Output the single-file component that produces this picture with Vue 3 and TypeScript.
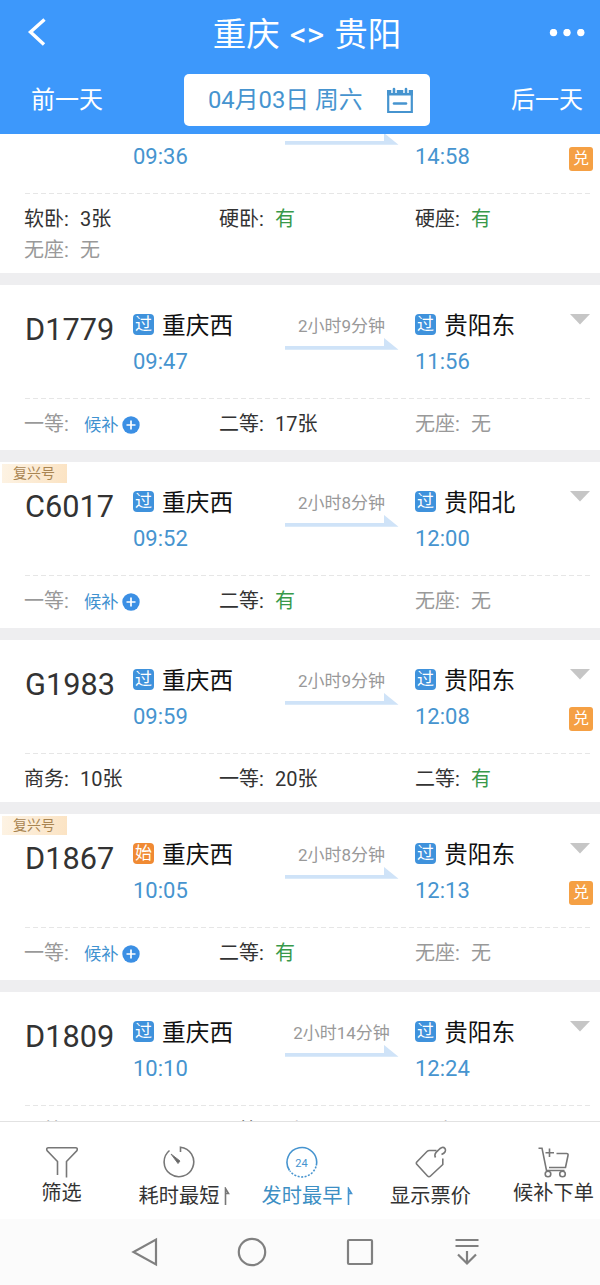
<script setup lang="ts">
type Mark = '过' | '始'

interface Seat {
  name: string
  value: string
  state: 'count' | 'plenty' | 'none' | 'waitlist'
}

interface Train {
  code: string
  from: string
  to: string
  fromMark: Mark
  toMark: Mark
  depart: string
  arrive: string
  duration: string
  fuxing: boolean
  redeem: boolean
  size: string
  seats: Seat[]
}

const count = (name: string, value: string): Seat => ({ name, value, state: 'count' })
const plenty = (name: string): Seat => ({ name, value: '有', state: 'plenty' })
const none = (name: string): Seat => ({ name, value: '无', state: 'none' })
const waitlist = (name: string): Seat => ({ name, value: '候补', state: 'waitlist' })

const trains: Train[] = [
  {
    code: 'K835', from: '重庆西', to: '贵阳', fromMark: '过', toMark: '过',
    depart: '09:36', arrive: '14:58', duration: '5小时22分钟', fuxing: false, redeem: true, size: 'tall',
    seats: [count('软卧', '3张'), plenty('硬卧'), plenty('硬座'), none('无座')],
  },
  {
    code: 'D1779', from: '重庆西', to: '贵阳东', fromMark: '过', toMark: '过',
    depart: '09:47', arrive: '11:56', duration: '2小时9分钟', fuxing: false, redeem: false, size: 'mid',
    seats: [waitlist('一等'), count('二等', '17张'), none('无座')],
  },
  {
    code: 'C6017', from: '重庆西', to: '贵阳北', fromMark: '过', toMark: '过',
    depart: '09:52', arrive: '12:00', duration: '2小时8分钟', fuxing: true, redeem: false, size: 'full',
    seats: [waitlist('一等'), plenty('二等'), none('无座')],
  },
  {
    code: 'G1983', from: '重庆西', to: '贵阳东', fromMark: '过', toMark: '过',
    depart: '09:59', arrive: '12:08', duration: '2小时9分钟', fuxing: false, redeem: true, size: 'short',
    seats: [count('商务', '10张'), count('一等', '20张'), plenty('二等')],
  },
  {
    code: 'D1867', from: '重庆西', to: '贵阳东', fromMark: '始', toMark: '过',
    depart: '10:05', arrive: '12:13', duration: '2小时8分钟', fuxing: true, redeem: true, size: 'full',
    seats: [waitlist('一等'), plenty('二等'), none('无座')],
  },
  {
    code: 'D1809', from: '重庆西', to: '贵阳东', fromMark: '过', toMark: '过',
    depart: '10:10', arrive: '12:24', duration: '2小时14分钟', fuxing: false, redeem: false, size: 'full',
    seats: [waitlist('一等'), count('二等', '1张'), none('无座')],
  },
]
</script>

<template>
  <div class="screen">
    <header class="header">
      <div class="title-row">
        <svg class="back" width="22" height="30" viewBox="0 0 22 30"><path d="M19.500 1.500 L5.500 14 L19 26.500" /></svg>
        <h1 class="title"><span>重庆</span><span class="swap">&lt;&gt;</span><span>贵阳</span></h1>
        <svg class="more" width="36" height="8" viewBox="0 0 36 8">
          <circle cx="4.500" cy="3.500" r="3.700" /><circle cx="18" cy="3.500" r="3.700" /><circle cx="31.800" cy="3.500" r="3.700" />
        </svg>
      </div>
      <div class="date-row">
        <span class="day">前一天</span>
        <div class="date">
          <span class="date-text">04月03日 周六</span>
          <svg width="26" height="28" viewBox="0 0 26 28">
            <path d="M1.200 5 H24.800 V26 H1.200 Z" fill="none" stroke="#4694cf" stroke-width="2.200" />
            <path d="M0.100 4 H25.900 V9.500 H0.100 Z" fill="#4694cf" />
            <path d="M7 1 V7 M19 1 V7" stroke="#fff" stroke-width="5.500" />
            <path d="M7 3 V7 M19 3 V7" stroke="#4694cf" stroke-width="2.600" stroke-linecap="round" />
            <path d="M7 17.500 H19" stroke="#4694cf" stroke-width="2.600" stroke-linecap="round" />
          </svg>
        </div>
        <span class="day">后一天</span>
      </div>
    </header>

    <main class="list">
      <article v-for="t in trains" :key="t.code" class="card" :class="t.size">
        <span v-if="t.fuxing" class="fuxing">复兴号</span>
        <div class="summary">
          <div class="code">{{ t.code }}</div>
          <div class="stop">
            <div class="station">
              <i class="mark" :class="{ origin: t.fromMark === '始' }">{{ t.fromMark }}</i><span>{{ t.from }}</span>
            </div>
            <div class="time">{{ t.depart }}</div>
          </div>
          <div class="trip">
            <span class="duration">{{ t.duration }}</span>
            <svg width="114" height="12" viewBox="0 0 114 12"><path d="M0 8 H99 V0 L113.500 11.700 H0 Z" fill="#cfe3f8" /></svg>
          </div>
          <div class="stop">
            <div class="station"><i class="mark">{{ t.toMark }}</i><span>{{ t.to }}</span></div>
            <div class="time">{{ t.arrive }}</div>
          </div>
          <div class="side">
            <svg width="20" height="11" viewBox="0 0 20 11"><path d="M0 0 H20 L10 10.500 Z" fill="#c6c6c6" /></svg>
            <i v-if="t.redeem" class="redeem">兑</i>
          </div>
        </div>
        <svg class="rule" width="566" height="2"><path d="M0 0.500 H566" stroke="#e6e6e6" stroke-width="1" stroke-dasharray="5 3" /></svg>
        <div class="seats">
          <div v-for="s in t.seats" :key="s.name" class="seat" :class="s.state">
            <span class="seat-name">{{ s.name }}:</span>
            <span class="seat-value">{{ s.value }}</span>
            <svg v-if="s.state === 'waitlist'" class="plus" width="18" height="18" viewBox="0 0 18 18">
              <circle cx="9" cy="9" r="8.700" fill="#3b8fe4" />
              <path d="M4.500 9 H13.500 M9 4.500 V13.500" stroke="#fff" stroke-width="1.700" />
            </svg>
          </div>
        </div>
      </article>
    </main>

    <nav class="tabs">
      <div class="tab raised">
        <svg width="34" height="32" viewBox="0 0 34 32">
          <path d="M12.500 29 V15.500 L2 4.500 Q1 1.800 3.500 1.800 H30.500 Q33 1.800 32 4.500 L21.500 15.500 V31.500" />
        </svg>
        <span>筛选</span>
      </div>
      <div class="tab flagged">
        <svg width="34" height="32" viewBox="0 0 34 32">
          <path d="M18.500 6 V1.200 A14.800 14.800 0 1 1 7.500 4.500" />
          <path d="M9 8 L18 15 L16 17.500 Z" fill="#666" stroke-width="1" />
        </svg>
        <span>耗时最短<svg class="flag" width="6" height="19" viewBox="0 0 6 19"><path d="M1.500 18 V1.500 L4.500 6.500 H1.500" /></svg></span>
      </div>
      <div class="tab flagged active">
        <svg width="34" height="32" viewBox="0 0 34 32">
          <path d="M4.500 24.500 A14.800 14.800 0 1 1 31.300 19.500" />
          <path d="M31 20.500 A14.800 14.800 0 0 1 5 25" stroke-dasharray="2 1.500" />
          <text x="16.500" y="20.500" text-anchor="middle">24</text>
        </svg>
        <span>发时最早<svg class="flag" width="6" height="19" viewBox="0 0 6 19"><path d="M1.500 18 V1.500 L4.500 6.500 H1.500" /></svg></span>
      </div>
      <div class="tab">
        <svg width="34" height="32" viewBox="0 0 34 32">
          <path d="M22.500 4.500 H15.500 Q14 4.500 13 5.500 L2.800 16 Q1.800 17.300 3 18.500 L13.500 30 Q15 31.300 16.500 30 L28.800 18.500 V12.500" />
          <path d="M21.500 11.500 Q19.500 8 24 4.500 Q28.500 -0.500 31 2.500 Q33 6 27.500 8.500" />
        </svg>
        <span>显示票价</span>
      </div>
      <div class="tab raised">
        <svg width="34" height="32" viewBox="0 0 34 32">
          <path d="M1.500 2.200 H5 L9.500 24.500 H27.500 M19.500 7.500 H29.500 Q31.500 7.500 31 9.500 L28.500 21.500 H12 M12.500 2.500 V11 M8.500 6.800 H17" />
          <circle cx="11" cy="28" r="2.800" /><circle cx="25.500" cy="28" r="2.800" />
        </svg>
        <span>候补下单</span>
      </div>
    </nav>

    <footer class="system">
      <svg viewBox="0 0 30 30"><path d="M26 2.500 V27.500 L3.500 15 Z" /></svg>
      <svg viewBox="0 0 30 30"><circle cx="15" cy="15" r="13.200" /></svg>
      <svg viewBox="0 0 30 30"><rect x="3" y="3" width="24" height="24" rx="1" /></svg>
      <svg viewBox="0 0 30 30"><path d="M3.500 3 H26.500 M3.500 9 H26.500 M15 14 V26.500 M6 17.500 L15 26.500 L24 17.500" /></svg>
    </footer>
  </div>
</template>

<style>
body {
  margin: 0;
  background: #fff;
}
</style>

<style scoped>
.screen {
  width: 600px;
  height: 1285px;
  display: flex;
  flex-direction: column;
  overflow: hidden;
  font-family: Roboto, "Noto Sans CJK SC", sans-serif;
  background: #fff;
}
.header {
  flex: none;
  height: 134px;
  box-sizing: border-box;
  background: #3d98fb;
  color: #fff;
}
.title-row {
  height: 66px;
  display: grid;
  grid-template-columns: 1fr auto 1fr;
  align-items: center;
  padding: 0 15px 0 25px;
}
.back {
  fill: none;
  stroke: #fff;
  stroke-width: 3.4;
}
.title {
  margin: 0;
  padding: 4px 0 0 4px;
  display: flex;
  gap: 10px;
  font-size: 33.5px;
  font-weight: 400;
  line-height: 48px;
}
.more {
  justify-self: end;
  fill: #fff;
}
.date-row {
  display: flex;
  align-items: center;
  justify-content: space-between;
  padding: 8px 17px 0 31px;
}
.day {
  font-size: 24px;
  line-height: 36px;
}
.date {
  display: flex;
  align-items: center;
  justify-content: space-between;
  box-sizing: border-box;
  width: 246px;
  height: 52px;
  padding: 0 17px 0 24px;
  border-radius: 5px;
  background: #fff;
  color: #4694cf;
  font-size: 23.8px;
}
.date-text {
  padding-bottom: 6px;
}
.list {
  height: 987px;
  overflow: hidden;
  background: #eeeef0;
}
.card {
  position: relative;
  margin-bottom: 12px;
  overflow: hidden;
  background: #fff;
}
.tall {
  height: 193px;
  margin-top: -54px;
}
.mid {
  height: 165px;
}
.full {
  height: 166px;
}
.short {
  height: 162px;
}
.fuxing {
  position: absolute;
  left: 2px;
  top: 2px;
  width: 54px;
  height: 19px;
  padding-left: 11px;
  background: linear-gradient(100deg, #fdf3e4, #fbe3c3);
  color: #a98552;
  font-size: 14px;
  line-height: 19px;
}
.summary {
  display: grid;
  grid-template-columns: 133px 152px 130px 154px 31px;
  height: 113px;
}
.code {
  padding: 27px 0 0 25px;
  font-size: 30.7px;
  line-height: 36px;
  color: #333;
}
.tall .code {
  padding-top: 25px;
}
.station {
  display: flex;
  align-items: center;
  height: 36px;
  padding-top: 22px;
  font-size: 23.7px;
  color: #111;
}
.station span {
  padding-top: 2px;
  line-height: 34px;
}
.mark {
  width: 21px;
  height: 21px;
  margin: 0 8px 2px 0;
  border-radius: 4px;
  background: #3f92dc;
  color: #fff;
  font-size: 17px;
  font-style: normal;
  line-height: 21px;
  text-align: center;
}
.origin {
  background: #f08a33;
}
.time {
  padding-top: 5px;
  font-size: 22px;
  line-height: 28px;
  color: #4694cf;
}
.trip {
  display: flex;
  flex-direction: column;
}
.duration {
  width: 113px;
  padding-top: 29px;
  font-size: 17px;
  line-height: 24px;
  color: #999;
  text-align: center;
}
.side {
  display: flex;
  flex-direction: column;
  padding-top: 29px;
}
.side svg {
  margin-left: 1px;
}
.redeem {
  width: 24px;
  height: 24px;
  margin-top: 27px;
  border-radius: 3px;
  background: #f5a044;
  color: #fff;
  font-size: 16px;
  font-style: normal;
  line-height: 24px;
  text-align: center;
}
.rule {
  display: block;
  margin-left: 25px;
}
.seats {
  display: grid;
  grid-template-columns: 195px 196px 160px;
  grid-auto-rows: 31px;
  padding: 9px 0 0 24px;
}
.seat {
  display: flex;
  align-items: center;
  font-size: 20px;
  line-height: 31px;
  color: #333;
}
.seat-name {
  width: 56px;
}
.plenty .seat-value {
  color: #38994a;
}
.none,
.waitlist {
  color: #999;
}
.waitlist .seat-value {
  margin-left: 4px;
  padding-top: 2px;
  font-size: 17.3px;
  color: #3f92d0;
}
.plus {
  margin: 0 0 0 3px;
}
.tabs {
  height: 98px;
  box-sizing: border-box;
  display: grid;
  grid-template-columns: repeat(5, 123px);
  border-top: 1px solid #e2e2e2;
  background: #fff;
}
.tab {
  display: flex;
  flex-direction: column;
  align-items: center;
  padding-top: 24px;
  font-size: 20.2px;
  line-height: 28px;
  color: #333;
}
.tab > svg {
  margin-bottom: 4px;
}
.raised > svg {
  margin-bottom: 1px;
}
.tab svg {
  flex: none;
  fill: none;
  stroke: #777;
  stroke-width: 1.6;
}
.tab text {
  fill: #4694cf;
  stroke: none;
  font-size: 11px;
}
.flagged > svg {
  margin-right: 11px;
}
.flagged .flag {
  margin-left: 5px;
  vertical-align: -3px;
}
.active {
  color: #3d8fc4;
}
.tab.active svg {
  stroke: #4694cf;
}
.system {
  flex: 1;
  display: grid;
  grid-template-columns: repeat(4, 107.4px);
  justify-content: center;
  justify-items: center;
  align-items: center;
  padding-left: 12px;
  background: #fbfbfb;
}
.system svg {
  width: 30px;
  height: 30px;
  fill: none;
  stroke: #808080;
  stroke-width: 2.2;
}
</style>
